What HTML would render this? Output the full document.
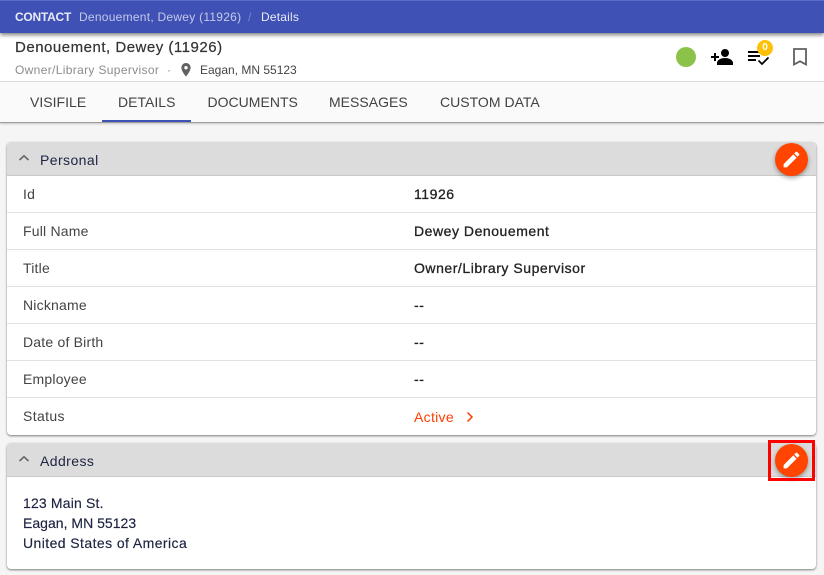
<!DOCTYPE html>
<html><head><meta charset="utf-8">
<style>
html,body{margin:0;padding:0}
body{width:824px;height:575px;overflow:hidden;background:#f5f5f5;font-family:"Liberation Sans",sans-serif;position:relative}
.a{position:absolute;white-space:nowrap}
.top{position:absolute;left:0;top:0;width:824px;height:33px;background:#3f51b5;border-top:1px solid #5c6bc8;box-sizing:border-box;box-shadow:0 2px 4px rgba(0,0,0,.5);z-index:3}
.head{position:absolute;left:0;top:33px;width:824px;height:48px;background:#fff;border-bottom:1px solid #e0e0e0}
.tabs{position:absolute;left:0;top:82px;width:824px;height:40px;background:#fafafa;border-bottom:1px solid #9e9e9e;box-shadow:0 1px 2px rgba(0,0,0,.2)}
.tab{position:absolute;top:94px;font-size:14px;line-height:16px;color:#424242;white-space:nowrap;z-index:2}
.card{position:absolute;left:7px;width:809px;background:#fff;border-radius:4px;box-shadow:0 1px 2px rgba(0,0,0,.5)}
.ch{position:absolute;left:0;top:0;width:809px;height:33px;background:#dcdcdc;border-bottom:1px solid #c8c8c8;border-radius:4px 4px 0 0}
.ct{position:absolute;left:33px;top:9px;font-size:14px;line-height:18px;color:#1c2340;letter-spacing:.42px}
.chev{position:absolute;left:11px;top:11px}
.row{position:absolute;left:0;width:809px;height:37px;border-bottom:1px solid #e2e2e2;box-sizing:border-box}
.l{position:absolute;left:16px;top:9px;font-size:14px;line-height:18px;color:#444;letter-spacing:.2px;white-space:nowrap}
.v{position:absolute;left:407px;top:9px;font-size:14px;line-height:18px;color:#222;letter-spacing:.54px;white-space:nowrap;-webkit-text-stroke:.3px #222}
.fab{position:absolute;left:775px;width:33px;height:33px;border-radius:50%;background:#ff4500;box-shadow:0 2px 5px rgba(0,0,0,.35);z-index:4}
.fab svg{position:absolute;left:6px;top:6px}
</style></head><body>
<div class="top"></div>
<div class="a" style="left:15px;top:10px;font-size:12px;line-height:15px;font-weight:bold;color:#e8eaf6;z-index:4;letter-spacing:-.25px">CONTACT</div>
<div class="a" style="left:79px;top:10px;font-size:12px;line-height:15px;color:#c5cae9;z-index:4;letter-spacing:.26px">Denouement, Dewey (11926)</div>
<div class="a" style="left:248px;top:10px;font-size:12px;line-height:15px;color:#7986cb;z-index:4">/</div>
<div class="a" style="left:261px;top:10px;font-size:12px;line-height:15px;color:#e8eaf6;z-index:4;letter-spacing:.2px">Details</div>

<div class="head"></div>
<div class="a" style="left:15px;top:39px;font-size:15px;line-height:18px;color:#333;letter-spacing:.51px;-webkit-text-stroke:.2px #333">Denouement, Dewey (11926)</div>
<div class="a" style="left:15px;top:63px;font-size:12px;line-height:15px;color:#8c8c8c;letter-spacing:.34px">Owner/Library Supervisor</div>
<div class="a" style="left:167px;top:63px;font-size:12px;line-height:15px;color:#8c8c8c">·</div>
<svg class="a" style="left:179px;top:62px" width="14" height="16" viewBox="0 0 14 16"><path fill="#616161" d="M7 1C4.400 1 2.400 3.100 2.400 5.700 2.400 9.200 7 14.500 7 14.500s4.600-5.300 4.600-8.800C11.600 3.100 9.600 1 7 1zm0 6.400a1.700 1.700 0 1 1 0-3.400 1.700 1.700 0 0 1 0 3.400z"/></svg>
<div class="a" style="left:200px;top:63px;font-size:12px;line-height:15px;color:#444;letter-spacing:0">Eagan, MN 55123</div>

<div class="a" style="left:676px;top:47px;width:20px;height:20px;border-radius:50%;background:#8bc34a"></div>
<svg class="a" style="left:710px;top:47px" width="24" height="20" viewBox="0 0 24 20"><path fill="#000" d="M15 2a4 4 0 1 1 0 8 4 4 0 0 1 0-8zM7 15.500c.6-3 4.500-4.500 8-4.500s7.400 1.500 8 4.500V18H7zM4 6h2v3h3v2H6v3H4v-3H1V9h3z"/></svg>
<svg class="a" style="left:747px;top:49px" width="24" height="18" viewBox="0 0 24 18"><path fill="#000" d="M1 2h12v2H1zM1 6h12v2H1zM1 10h8v2H1z"/><path fill="none" stroke="#000" stroke-width="1.700" d="M11.500 11.500l3.500 3.500 6.500-6.500"/></svg>
<div class="a" style="left:757px;top:40px;width:16px;height:16px;border-radius:50%;background:#ffc107;color:#fff;font-size:10px;font-weight:bold;line-height:16px;text-align:center">0</div>
<svg class="a" style="left:792px;top:47px" width="16" height="20" viewBox="0 0 16 20"><path fill="none" stroke="#616161" stroke-width="1.800" d="M2 2h12v15.500l-6-3.200-6 3.200z"/></svg>

<div class="tabs"></div>
<div class="tab" style="left:30px;letter-spacing:.02px">VISIFILE</div>
<div class="tab" style="left:118px;letter-spacing:.02px">DETAILS</div>
<div class="tab" style="left:207.500px;letter-spacing:.02px">DOCUMENTS</div>
<div class="tab" style="left:329px;letter-spacing:.02px">MESSAGES</div>
<div class="tab" style="left:440px;letter-spacing:.02px">CUSTOM DATA</div>
<div class="a" style="left:102px;top:120px;width:89px;height:2px;background:#3f51b5;z-index:2"></div>

<div class="card" style="top:142px;height:293px">
 <div class="ch"><svg class="chev" width="12" height="10" viewBox="0 0 12 10"><path fill="none" stroke="#666" stroke-width="1.600" d="M1.500 7L6 2.800 10.500 7"/></svg><div class="ct">Personal</div></div>
 <div class="row" style="top:34px"><div class="l">Id</div><div class="v">11926</div></div>
 <div class="row" style="top:71px"><div class="l">Full Name</div><div class="v">Dewey Denouement</div></div>
 <div class="row" style="top:108px"><div class="l">Title</div><div class="v">Owner/Library Supervisor</div></div>
 <div class="row" style="top:145px"><div class="l">Nickname</div><div class="v">--</div></div>
 <div class="row" style="top:182px"><div class="l">Date of Birth</div><div class="v">--</div></div>
 <div class="row" style="top:219px"><div class="l">Employee</div><div class="v">--</div></div>
 <div class="row" style="top:256px;border:0"><div class="l" style="letter-spacing:.36px">Status</div><div class="v" style="color:#ff3d00;-webkit-text-stroke:0;top:10px;letter-spacing:.3px">Active</div>
 <svg class="a" style="left:458px;top:13px" width="10" height="12" viewBox="0 0 10 12"><path fill="none" stroke="#ff3d00" stroke-width="1.500" d="M2.500 1.500L7 6l-4.500 4.500"/></svg></div>
</div>

<div class="card" style="top:443px;height:126px">
 <div class="ch"><svg class="chev" width="12" height="10" viewBox="0 0 12 10"><path fill="none" stroke="#666" stroke-width="1.600" d="M1.500 7L6 2.800 10.500 7"/></svg><div class="ct">Address</div></div>
 <div class="a" style="left:16px;top:50px;font-size:14px;line-height:20px;color:#1c2340;-webkit-text-stroke:.15px #1c2340;letter-spacing:.42px"><span style="letter-spacing:.17px">123 Main St.</span><br><span style="letter-spacing:.02px">Eagan, MN 55123</span><br>United States of America</div>
</div>

<div class="fab" style="top:143px"><svg width="21" height="21" viewBox="0 0 24 24"><path fill="#fff" d="M3 17.250V21h3.750L17.810 9.940l-3.750-3.750zM20.710 7.040a1 1 0 0 0 0-1.410l-2.340-2.340a1 1 0 0 0-1.410 0l-1.830 1.830 3.750 3.750z"/></svg></div>
<div class="fab" style="top:444px"><svg width="21" height="21" viewBox="0 0 24 24"><path fill="#fff" d="M3 17.250V21h3.750L17.810 9.940l-3.750-3.750zM20.710 7.040a1 1 0 0 0 0-1.410l-2.340-2.340a1 1 0 0 0-1.410 0l-1.830 1.830 3.750 3.750z"/></svg></div>
<div class="a" style="left:768px;top:440px;width:47px;height:41px;box-sizing:border-box;border:3px solid #f00;z-index:5"></div>
</body></html>
